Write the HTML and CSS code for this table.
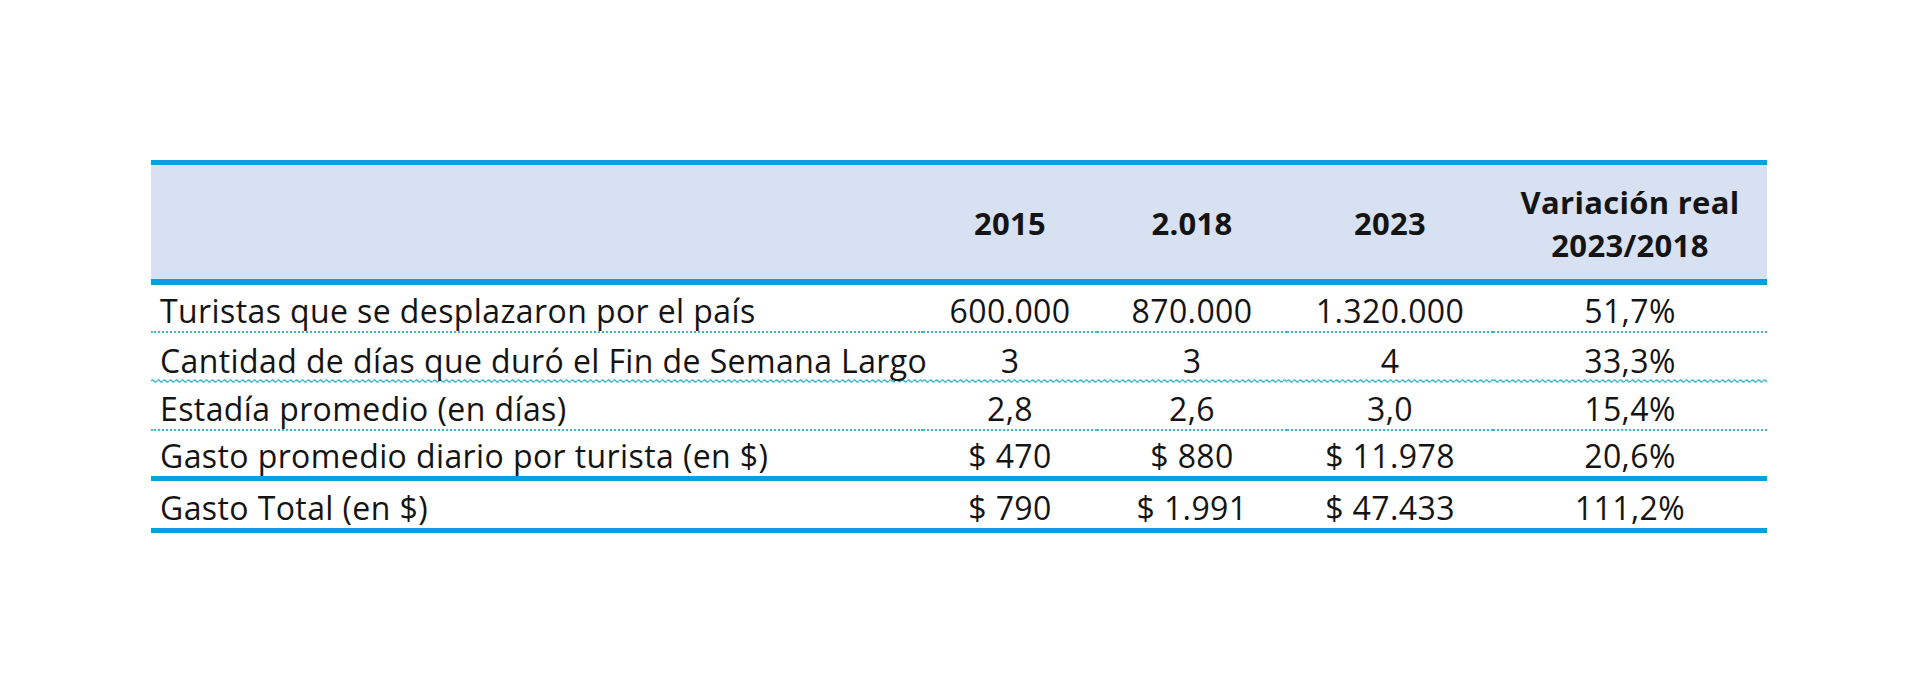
FILE: index.html
```html
<!DOCTYPE html>
<html lang="es">
<head>
<meta charset="utf-8">
<title>Fin de semana largo</title>
<link rel="stylesheet" href="styles.css">
</head>
<body>
<div class="page">
  <table class="stats">
    <colgroup>
      <col class="c-label">
      <col class="c-1">
      <col class="c-2">
      <col class="c-3">
      <col class="c-4">
    </colgroup>
    <thead>
      <tr>
        <th></th>
        <th>2015</th>
        <th>2.018</th>
        <th>2023</th>
        <th>Variación real<br>2023/2018</th>
      </tr>
    </thead>
    <tbody>
      <tr class="dotted">
        <td>Turistas que se desplazaron por el país</td>
        <td>600.000</td>
        <td>870.000</td>
        <td>1.320.000</td>
        <td>51,7%</td>
      </tr>
      <tr class="wavy">
        <td>Cantidad de días que duró el Fin de Semana Largo</td>
        <td>3</td>
        <td>3</td>
        <td>4</td>
        <td>33,3%</td>
      </tr>
      <tr class="dotted">
        <td>Estadía promedio (en días)</td>
        <td>2,8</td>
        <td>2,6</td>
        <td>3,0</td>
        <td>15,4%</td>
      </tr>
      <tr class="solid">
        <td>Gasto promedio diario por turista (en $)</td>
        <td>$ 470</td>
        <td>$ 880</td>
        <td>$ 11.978</td>
        <td>20,6%</td>
      </tr>
      <tr class="solid last">
        <td>Gasto Total (en $)</td>
        <td>$ 790</td>
        <td>$ 1.991</td>
        <td>$ 47.433</td>
        <td>111,2%</td>
      </tr>
    </tbody>
  </table>
</div>
</body>
</html>
```

FILE: styles.css
```css
html, body {
  margin: 0;
  padding: 0;
  background: #ffffff;
}

.page {
  width: 1920px;
  height: 695px;
  padding: 160px 0 0 151px;
  box-sizing: border-box;
}

.stats {
  width: 1616px;
  border-collapse: collapse;
  table-layout: fixed;
  font-family: "Open Sans", "Noto Sans", sans-serif;
  color: #141414;
}

.c-label { width: 772px; }
.c-1 { width: 174px; }
.c-2 { width: 190px; }
.c-3 { width: 206px; }
.c-4 { width: 274px; }

.stats thead th {
  background: #d8e1f1;
  border-top: 5px solid #0c9fde;
  border-bottom: 6px solid #0c9fde;
  height: 119px;
  padding: 4px 0 0 0;
  box-sizing: border-box;
  font-size: 31px;
  font-weight: 700;
  line-height: 43px;
  letter-spacing: 0.3px;
  text-align: center;
  vertical-align: middle;
}

.stats tbody td {
  height: 43px;
  padding: 0 0 3px 0;
  font-size: 32px;
  line-height: 34px;
  letter-spacing: 0.4px;
  text-align: center;
  vertical-align: bottom;
  white-space: nowrap;
}

.stats tbody td:first-child {
  text-align: left;
  padding-left: 9px;
}

.stats tbody tr.dotted td {
  border-bottom: 2px dotted #3db6cf;
}

.stats tbody tr.wavy td {
  height: 45px;
  border-bottom: 0;
  padding-bottom: 5px;
  background-image: url("data:image/svg+xml,%3Csvg xmlns='http://www.w3.org/2000/svg' width='6' height='4'%3E%3Cpath d='M0 2 Q1.5 0 3 2 T6 2' fill='none' stroke='%233db6cf' stroke-width='1.3'/%3E%3C/svg%3E");
  background-repeat: repeat-x;
  background-position: left bottom;
}

.stats tbody tr.solid td {
  height: 42px;
  border-bottom: 5px solid #0c9fde;
}

.stats tbody tr.last td {
  height: 44px;
}
```
